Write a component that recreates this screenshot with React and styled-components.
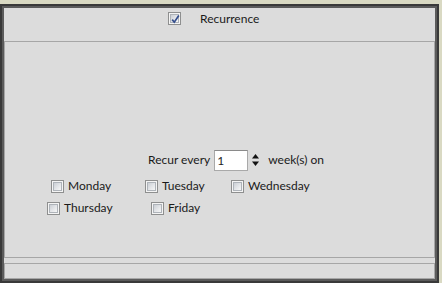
import React from "react";
import styled, { createGlobalStyle } from "styled-components";

const Global = createGlobalStyle`
  html, body { margin: 0; padding: 0; }
  body {
    background: #d9d9c3;
    font-family: "Lato", "Segoe UI", sans-serif;
    font-size: 12px;
    color: #1a1a1a;
  }
`;

const Frame = styled.div`
  margin-top: 4px;
  width: 439px;
  height: 279px;
  box-sizing: border-box;
  border: 2px solid #393939;
  box-shadow: inset 0 0 0 2px #5b5b5b;
  padding: 2px;
  background: #dcdcdc;
  display: flex;
  flex-direction: column;
`;

const Header = styled.div`
  height: 33px;
  box-sizing: border-box;
  display: flex;
  align-items: flex-start;
  padding-left: 164px;
  padding-top: 4px;
  gap: 19px;
`;

const Box = styled.div`
  border: 1px solid #a6a6a6;
  box-sizing: border-box;
  flex: ${(p) => (p.$grow ? 1 : "none")};
  height: ${(p) => (p.$h ? p.$h + "px" : "auto")};
  margin-top: ${(p) => p.$mt || 0}px;
  display: flex;
  flex-direction: column;
`;

const Body = styled.div`
  padding-top: 107px;
  display: flex;
  flex-direction: column;
`;

const RecurRow = styled.div`
  display: flex;
  align-items: center;
  padding-left: 143px;
  height: 22px;
`;

const Label = styled.span`
  white-space: nowrap;
  line-height: 14px;
`;

const NumInput = styled.div`
  width: 34px;
  height: 21px;
  box-sizing: border-box;
  margin-left: 4px;
  border: 1px solid #a9a9a9;
  border-top-color: #8a8a8a;
  background: #ffffff;
  padding-left: 2px;
  display: flex;
  align-items: center;
  color: #1e1e1e;
`;

const Spinner = styled.svg`
  margin-left: 4px;
  margin-right: 9px;
  display: block;
`;

const DayRow = styled.div`
  display: flex;
  align-items: center;
  padding-left: ${(p) => p.$pl}px;
  margin-top: ${(p) => p.$mt}px;
  height: 14px;
`;

const Day = styled.label`
  display: flex;
  align-items: center;
  gap: 4px;
  width: ${(p) => (p.$w ? p.$w + "px" : "auto")};
`;

const Box13 = styled.span`
  width: 13px;
  height: 13px;
  box-sizing: border-box;
  border: 1px solid #8e8f8f;
  background: #f4f4f4;
  position: relative;
  display: inline-block;
  flex: none;
  &::before {
    content: "";
    position: absolute;
    inset: 1px;
    border: 1px solid #aeb3b9;
    background: linear-gradient(135deg, #cbcfd5 0%, #e4e6e9 55%, #f6f6f6 100%);
  }
`;

const CheckSvg = styled.svg`
  position: absolute;
  left: 1px;
  top: 1px;
`;

function CheckBox({ checked }) {
  return (
    <Box13>
      {checked && (
        <CheckSvg width="11" height="11" viewBox="0 0 11 11">
          <path
            d="M2.2 5.6 L4.3 8.2 L8.8 1.6"
            fill="none"
            stroke="#334d8c"
            strokeWidth="1.7"
          />
        </CheckSvg>
      )}
    </Box13>
  );
}

export default function App() {
  return (
    <>
      <Global />
      <Frame>
        <Header>
          <CheckBox checked />
          <Label>Recurrence</Label>
        </Header>
        <Box $grow>
          <Body>
            <RecurRow>
              <Label>Recur every</Label>
              <NumInput>1</NumInput>
              <Spinner width="7" height="14" viewBox="0 0 7 14">
                <path d="M3.5 1 L7 5.5 L0 5.5 Z" fill="#111" />
                <path d="M0 8.5 L7 8.5 L3.5 13 Z" fill="#111" />
              </Spinner>
              <Label>week(s) on</Label>
            </RecurRow>
            <DayRow $pl={46} $mt={8}>
              <Day $w={94}>
                <CheckBox />
                <Label>Monday</Label>
              </Day>
              <Day $w={86}>
                <CheckBox />
                <Label>Tuesday</Label>
              </Day>
              <Day>
                <CheckBox />
                <Label>Wednesday</Label>
              </Day>
            </DayRow>
            <DayRow $pl={42} $mt={8}>
              <Day $w={104}>
                <CheckBox />
                <Label>Thursday</Label>
              </Day>
              <Day>
                <CheckBox />
                <Label>Friday</Label>
              </Day>
            </DayRow>
          </Body>
        </Box>
        <Box $h={16} $mt={5} />
      </Frame>
    </>
  );
}
